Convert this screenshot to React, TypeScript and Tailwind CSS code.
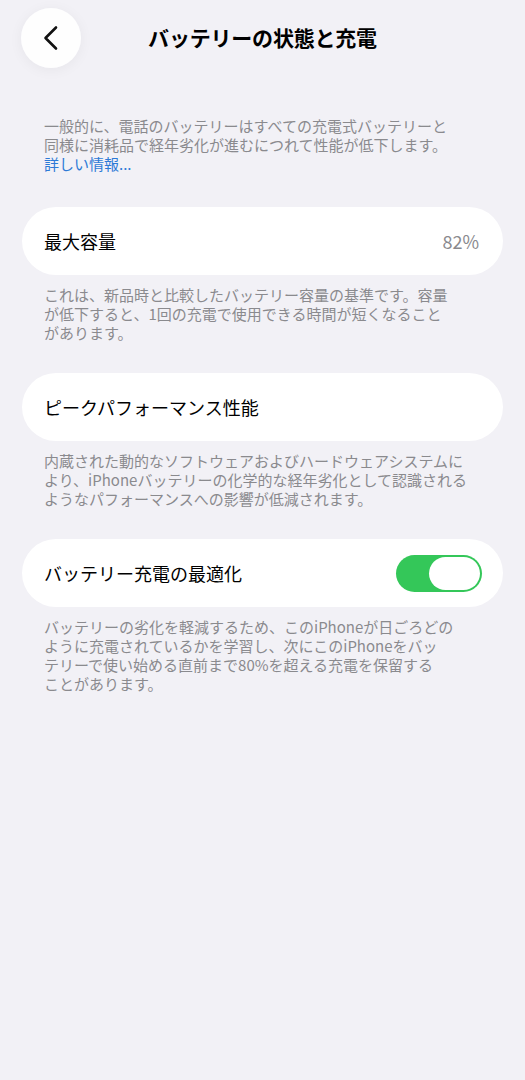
import React from "react";

const font = { fontFamily: '"Noto Sans CJK JP", "Noto Sans", sans-serif' };

const Note = ({ children, className = "" }: { children: React.ReactNode; className?: string }) => (
  <p className={`px-[44px] text-[15px] leading-[19px] text-[#8a8a8e] ${className}`}>{children}</p>
);

const Row = ({ children }: { children: React.ReactNode }) => (
  <div className="mx-[22px] h-[68px] rounded-full bg-white flex items-center justify-between pl-[22px] pr-[21px]">
    {children}
  </div>
);

const Toggle = ({ on }: { on: boolean }) => (
  <div
    className={`w-[86px] h-[37px] rounded-full p-[2px] flex ${on ? "bg-[#34c759] justify-end" : "bg-[#e5e5ea] justify-start"}`}
  >
    <div className="w-[51px] h-[33px] rounded-full bg-white" />
  </div>
);

export default function App() {
  return (
    <div className="min-h-[1080px] w-full bg-[#f2f1f6] text-black" style={font}>
      <header className="grid grid-cols-[60px_1fr_60px] items-center px-[21px] pt-[8px]">
        <button className="w-[60px] h-[60px] rounded-full bg-white/90 shadow-[0_2px_14px_rgba(0,0,0,0.05)] flex items-center justify-center">
          <svg width="24" height="26" viewBox="0 0 24 26" fill="none">
            <path d="M17 2.5 L6.5 13 L17 23.5" stroke="#111" strokeWidth="2.6" strokeLinecap="round" strokeLinejoin="round" />
          </svg>
        </button>
        <h1 className="text-center text-[21px] font-bold tracking-[-0.2px]">バッテリーの状態と充電</h1>
        <div />
      </header>

      <Note className="mt-[48px]">
        一般的に、電話のバッテリーはすべての充電式バッテリーと
        <br />
        同様に消耗品で経年劣化が進むにつれて性能が低下します。
        <br />
        <span className="text-[#2d7ad6]">詳しい情報...</span>
      </Note>

      <div className="mt-[34px]">
        <Row>
          <span className="text-[18px]">最大容量</span>
          <span className="text-[18px] text-[#8a8a8e] pr-[3px]">82%</span>
        </Row>
      </div>
      <Note className="mt-[10px]">
        これは、新品時と比較したバッテリー容量の基準です。容量
        <br />
        が低下すると、1回の充電で使用できる時間が短くなること
        <br />
        があります。
      </Note>

      <div className="mt-[31px]">
        <Row>
          <span className="text-[18px]">ピークパフォーマンス性能</span>
        </Row>
      </div>
      <Note className="mt-[10px]">
        内蔵された動的なソフトウェアおよびハードウェアシステムに
        <br />
        より、iPhoneバッテリーの化学的な経年劣化として認識される
        <br />
        ようなパフォーマンスへの影響が低減されます。
      </Note>

      <div className="mt-[31px]">
        <Row>
          <span className="text-[18px]">バッテリー充電の最適化</span>
          <Toggle on />
        </Row>
      </div>
      <Note className="mt-[10px] leading-[19.2px]">
        バッテリーの劣化を軽減するため、このiPhoneが日ごろどの
        <br />
        ように充電されているかを学習し、次にこのiPhoneをバッ
        <br />
        テリーで使い始める直前まで80%を超える充電を保留する
        <br />
        ことがあります。
      </Note>
    </div>
  );
}
